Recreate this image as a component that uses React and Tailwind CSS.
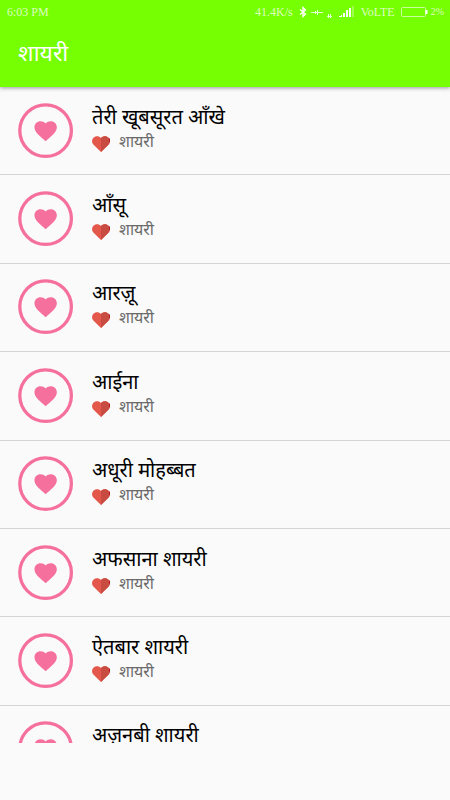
const categories = [
  'तेरी खूबसूरत आँखे',
  'आँसू',
  'आरज़ू',
  'आईना',
  'अधूरी मोहब्बत',
  'अफसाना शायरी',
  'ऐतबार शायरी',
  'अज़नबी शायरी',
];

const HEART =
  'M12 21.35l-1.45-1.32C5.4 15.36 2 12.28 2 8.5 2 5.42 4.42 3 7.5 3c1.74 0 3.41.81 4.5 2.09C13.09 3.81 14.76 3 16.5 3 19.58 3 22 5.42 22 8.5c0 3.78-3.4 6.86-8.55 11.54L12 21.35z';

function CircleHeart() {
  return (
    <svg viewBox="0 0 56 56" className="size-14 shrink-0" aria-hidden="true">
      <circle cx="27.6" cy="27.6" r="25.8" fill="none" stroke="#f5709c" strokeWidth="3.3" />
      <path d={HEART} fill="#f5709c" transform="translate(14.2 14.9) scale(1.12 1.09)" />
    </svg>
  );
}

function SplitHeart() {
  return (
    <svg viewBox="0 0 19 17" className="h-4 w-[18px] shrink-0" aria-hidden="true">
      <path d="M9.5 17L1.4 9C-.5 7-.4 3.7 1.2 2 3.6-.5 7.4-.3 9.5 2.2 11.6-.3 15.4-.5 17.7 2c1.7 1.8 1.7 5-.1 7z" fill="#e4584c" />
      <path d="M9.5 17V2.2C11.6-.3 15.4-.5 17.7 2c1.7 1.8 1.7 5-.1 7z" fill="#c94c42" />
      <path d="M18 2.6h1v3.4h-1z" fill="#b3121c" />
    </svg>
  );
}

function StatusBar() {
  return (
    <div className="flex h-6 items-center justify-between pr-1.5 pl-[7px] font-['Liberation_Serif',serif] text-xs text-[#dcffc0]">
      <span>6:03 PM</span>
      <div className="flex items-center">
        <span>41.4K/s</span>
        <svg viewBox="0 0 8 12" className="ml-1.5 h-3 w-2" fill="none" stroke="#fff" strokeWidth="1.3" aria-hidden="true">
          <path d="M1 3.5l5.5 4.5L4 10.5V1.5l2.5 2.500L1 8.5" />
        </svg>
        <svg viewBox="0 0 12 8" className="ml-1 h-2 w-3" fill="#e4ffd0" aria-hidden="true">
          <path d="M0 4h12v1H0zM4 3h1v3H4zM6 2h1v5H6z" />
        </svg>
        <svg viewBox="0 0 5 12" className="ml-1 h-3 w-[5px]" fill="#e4ffd0" aria-hidden="true">
          <path d="M1 8h1v4H1zM3 8h1v4H3zM0 10h5v1H0z" />
        </svg>
        <svg viewBox="0 0 16 12" className="ml-[7px] h-3 w-4" fill="#fff" aria-hidden="true">
          <path d="M0 10h3v1H0zM2 9h1v1H2zM4 7h2v4H4zM7 4h2v7H7zM10 2h2v9h-2z" />
          <path d="M13 0h2v11h-2z" fillOpacity=".3" />
        </svg>
        <span className="ml-1.5">VoLTE</span>
        <svg viewBox="0 0 27 12" className="ml-1.5 h-3 w-[27px]" fill="none" stroke="#c8ff9c" aria-hidden="true">
          <rect x=".5" y="1.5" width="24" height="9" rx="1" />
          <path d="M25.5 4v4" stroke="#fff" strokeWidth="2" />
        </svg>
        <span className="ml-[3px] text-[10px]">2%</span>
      </div>
    </div>
  );
}

export default function App() {
  return (
    <div className="flex h-screen flex-col bg-[#fafafa] font-['Noto_Sans_Devanagari','Noto_Sans',sans-serif]">
      <header className="relative z-10 shrink-0 bg-[#76ff03] shadow-[0_1px_4px_rgba(0,0,0,0.4)]">
        <StatusBar />
        <h1 className="flex h-[63px] items-center px-[18px] text-[23px] text-white">शायरी</h1>
      </header>
      <main className="min-h-0 flex-1 overflow-hidden">
        <ul className="grid h-[707px] grid-rows-8">
          {categories.map((name) => (
            <li key={name} className="border-b border-[#d4d4d4]">
              <button type="button" className="flex h-full w-full items-center gap-[18px] px-[18px] text-left">
                <CircleHeart />
                <span className="flex flex-col">
                  <span className="text-xl leading-[26px] text-black">{name}</span>
                  <span className="flex items-center gap-[9px] text-base leading-6 text-[#6a6a6a]">
                    <SplitHeart />
                    शायरी
                  </span>
                </span>
              </button>
            </li>
          ))}
        </ul>
      </main>
      <footer className="h-[57px] shrink-0" />
    </div>
  );
}
